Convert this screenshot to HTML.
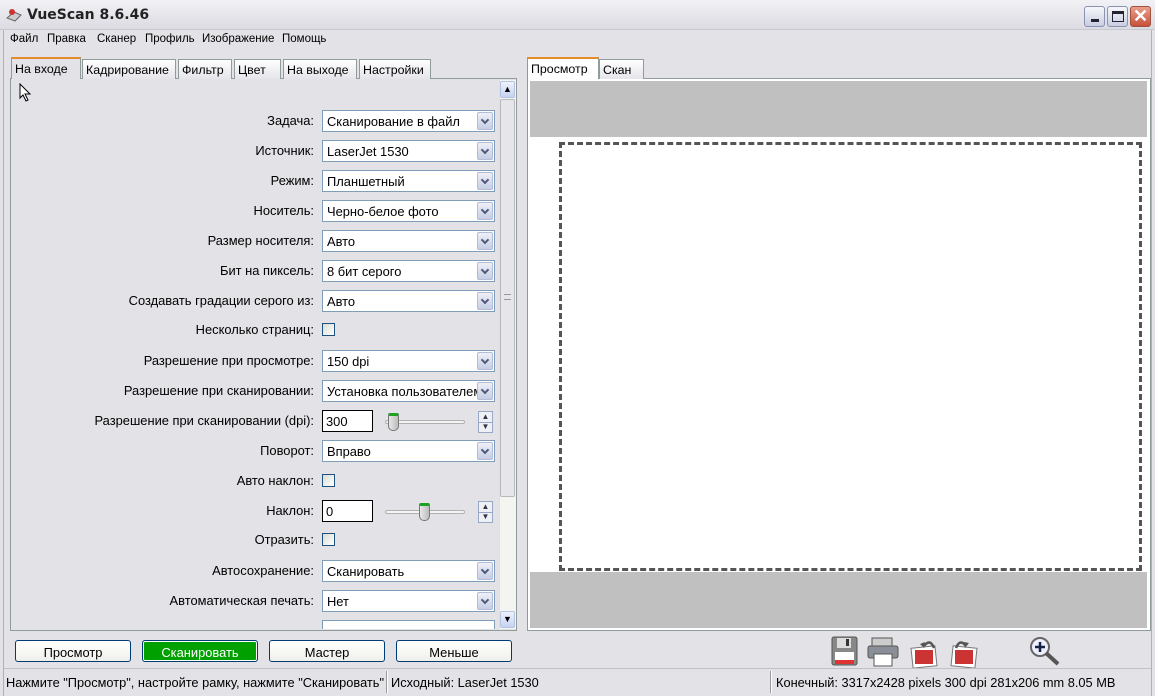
<!DOCTYPE html>
<html><head><meta charset="utf-8"><style>
*{box-sizing:border-box}
body{margin:0;width:1155px;height:696px;overflow:hidden;background:#e3e2e7;font-family:"Liberation Sans",sans-serif;font-size:12.9px;color:#000;position:relative}
.a{position:absolute}
.lbl{position:absolute;right:841px;white-space:nowrap;line-height:14px}
.cb{position:absolute;left:322px;width:173px;height:22px;background:#fff;border:1px solid #7f9db9;padding:3px 0 0 4px;white-space:nowrap;overflow:hidden}
.cb i{position:absolute;right:1px;top:1px;width:16px;height:18px;background:linear-gradient(#eef0f8,#c6cde4);border:1px solid #b0bcd8;border-radius:2px}
.cb i:after{content:"";position:absolute;left:4px;top:4px;width:4px;height:4px;border-right:2px solid #4d5a7a;border-bottom:2px solid #4d5a7a;transform:rotate(45deg)}
.ck{position:absolute;left:322px;width:13px;height:13px;border:1px solid #1c5180;background:linear-gradient(135deg,#dcdcd6,#fff)}
.tab{position:absolute;top:59px;height:20px;background:linear-gradient(#fff,#e4e4ea);border:1px solid #919b9c;border-bottom:none;padding:3px 3px 0;white-space:nowrap;font-size:12.4px;overflow:hidden}
.btn{position:absolute;top:640px;width:116px;height:22px;border:1px solid #003c74;border-radius:3px;background:linear-gradient(#fff,#f0f0ea);text-align:center;padding-top:4px}
.tb{position:absolute;width:51px;height:22px;border:1px solid #000;background:#fff;padding:3px 0 0 3px}
.sl{position:absolute;height:4px;width:80px;border:1px solid #b0b0b0;background:#f4f4f4;border-radius:2px}
.th{position:absolute;width:11px;height:18px;background:linear-gradient(90deg,#e8e8e8,#bcbcbc);border:1px solid #777;border-top:3px solid #21a121;border-radius:2px 2px 5px 5px}
.sp{position:absolute;left:478px;width:15px;height:22px;border:1px solid #9aa8c8;background:#eef0f6;font-size:8px;line-height:10px;text-align:center;color:#334}
.sp:before{content:"";position:absolute;left:0;right:0;top:10px;border-top:1px solid #9aa8c8}
.m{position:absolute;top:33px;font-size:11.5px}
.st{position:absolute;top:675px;white-space:nowrap;font-size:12.8px}
</style></head><body>
<div class="a" style="left:0;top:0;width:1155px;height:30px;background:linear-gradient(#f2f1f5,#dcdbe2);border-bottom:1px solid #c8c8d0"></div>
<div class="a" style="left:6px;top:8px;width:16px;height:14px"><svg width="16" height="14"><path d="M1 10 L8 4 L15 7 L9 13Z" fill="#ccc" stroke="#666"/><circle cx="6" cy="4" r="3" fill="#c33"/></svg></div>
<div class="a" style="left:27px;top:7px;font-weight:bold;font-size:14px;font-family:'DejaVu Sans',sans-serif;color:#222">VueScan 8.6.46</div>
<div class="a" style="left:1084px;top:6px;width:21px;height:21px;border:1px solid #8a92b4;border-radius:3px;background:linear-gradient(#f6f7fb,#c9cde0)"><div class="a" style="left:6px;top:12px;width:8px;height:3px;background:#223"></div></div>
<div class="a" style="left:1107px;top:6px;width:21px;height:21px;border:1px solid #8a92b4;border-radius:3px;background:linear-gradient(#f6f7fb,#c9cde0)"><div class="a" style="left:4px;top:4px;width:12px;height:11px;border:1px solid #223;border-top:3px solid #223"></div></div>
<div class="a" style="left:1130px;top:6px;width:21px;height:21px;border:1px solid #a05040;border-radius:3px;background:linear-gradient(#e9a08a,#c8503a);color:#fff;font-size:18px;line-height:19px;text-align:center;font-weight:bold">✕</div>
<div class="m" style="left:10px">Файл</div><div class="m" style="left:47px">Правка</div><div class="m" style="left:97px">Сканер</div><div class="m" style="left:145px">Профиль</div><div class="m" style="left:202px">Изображение</div><div class="m" style="left:282px">Помощь</div>
<div class="a" style="left:3px;top:30px;width:1px;height:666px;background:#b0b0b8"></div>
<div class="a" style="left:1151px;top:30px;width:1px;height:666px;background:#b0b0b8"></div>
<div class="a" style="left:10px;top:78px;width:507px;height:553px;border:1px solid #919b9c;background:#e3e2e7"></div>
<div class="tab" style="left:82px;width:94px">Кадрирование</div>
<div class="tab" style="left:178px;width:54px">Фильтр</div>
<div class="tab" style="left:234px;width:47px">Цвет</div>
<div class="tab" style="left:283px;width:74px">На выходе</div>
<div class="tab" style="left:359px;width:72px">Настройки</div>
<div class="tab" style="left:11px;top:57px;height:22px;width:70px;background:#e3e2e7;border-top:2px solid #e68b2c">На входе</div>
<svg class="a" style="left:19px;top:83px" width="14" height="20"><path d="M1 1 L1 15 L4 12 L7 18 L9 17 L6 11 L11 11Z" fill="#fff" stroke="#000"/></svg>
<div class="a" style="left:499px;top:80px;width:17px;height:549px;background:#f4f4f0;border-left:1px solid #e0e0e0"></div>
<div class="a" style="left:500px;top:81px;width:15px;height:17px;border:1px solid #b7c4e0;border-radius:2px;background:linear-gradient(#eef2fc,#c5d2f0);text-align:center;font-size:9px;line-height:15px">▲</div>
<div class="a" style="left:500px;top:99px;width:15px;height:398px;border:1px solid #b8b8c0;border-radius:2px;background:#e6e6ea"></div>
<div class="a" style="left:504px;top:294px;width:7px;height:6px;border-top:1px solid #999;border-bottom:1px solid #999"></div>
<div class="a" style="left:500px;top:611px;width:15px;height:17px;border:1px solid #b7c4e0;border-radius:2px;background:linear-gradient(#eef2fc,#c5d2f0);text-align:center;font-size:9px;line-height:15px">▼</div>
<div class="lbl" style="top:114px">Задача:</div><div class="cb" style="top:110px">Сканирование в файл<i></i></div>
<div class="lbl" style="top:144px">Источник:</div><div class="cb" style="top:140px">LaserJet 1530<i></i></div>
<div class="lbl" style="top:174px">Режим:</div><div class="cb" style="top:170px">Планшетный<i></i></div>
<div class="lbl" style="top:204px">Носитель:</div><div class="cb" style="top:200px">Черно-белое фото<i></i></div>
<div class="lbl" style="top:234px">Размер носителя:</div><div class="cb" style="top:230px">Авто<i></i></div>
<div class="lbl" style="top:264px">Бит на пиксель:</div><div class="cb" style="top:260px">8 бит серого<i></i></div>
<div class="lbl" style="top:294px">Создавать градации серого из:</div><div class="cb" style="top:290px">Авто<i></i></div>
<div class="lbl" style="top:323px">Несколько страниц:</div><div class="ck" style="top:323px"></div>
<div class="lbl" style="top:354px">Разрешение при просмотре:</div><div class="cb" style="top:350px">150 dpi<i></i></div>
<div class="lbl" style="top:384px">Разрешение при сканировании:</div><div class="cb" style="top:380px">Установка пользователем<i></i></div>
<div class="lbl" style="top:414px">Разрешение при сканировании (dpi):</div><div class="tb" style="left:322px;top:410px">300</div>
<div class="sl" style="left:385px;top:420px"></div><div class="th" style="left:388px;top:413px"></div><div class="sp" style="top:411px">▲<br>▼</div>
<div class="lbl" style="top:444px">Поворот:</div><div class="cb" style="top:440px">Вправо<i></i></div>
<div class="lbl" style="top:474px">Авто наклон:</div><div class="ck" style="top:474px"></div>
<div class="lbl" style="top:504px">Наклон:</div><div class="tb" style="left:322px;top:500px">0</div>
<div class="sl" style="left:385px;top:510px"></div><div class="th" style="left:419px;top:503px"></div><div class="sp" style="top:501px">▲<br>▼</div>
<div class="lbl" style="top:533px">Отразить:</div><div class="ck" style="top:533px"></div>
<div class="lbl" style="top:564px">Автосохранение:</div><div class="cb" style="top:560px">Сканировать<i></i></div>
<div class="lbl" style="top:594px">Автоматическая печать:</div><div class="cb" style="top:590px">Нет<i></i></div>
<div class="a" style="left:322px;top:620px;width:173px;height:9px;background:#fff;border:1px solid #7f9db9;border-bottom:none"></div>
<div class="btn" style="left:15px">Просмотр</div>
<div class="btn" style="left:142px;background:#00a000;color:#fff;border-color:#003c74;box-shadow:inset 0 0 0 1px #fff">Сканировать</div>
<div class="btn" style="left:269px">Мастер</div>
<div class="btn" style="left:396px">Меньше</div>
<div class="a" style="left:527px;top:78px;width:624px;height:553px;border:1px solid #919b9c;background:#fff"></div>
<div class="tab" style="left:599px;width:45px">Скан</div>
<div class="tab" style="left:527px;top:57px;height:22px;width:72px;background:#fff;border-top:2px solid #e68b2c">Просмотр</div>
<div class="a" style="left:530px;top:81px;width:617px;height:56px;background:#c0c0c0"></div>
<div class="a" style="left:530px;top:572px;width:617px;height:56px;background:#c0c0c0"></div>
<div class="a" style="left:559px;top:142px;width:583px;height:429px;border:3px dashed #555"></div>
<svg class="a" style="left:830px;top:634px" width="240" height="34">
<rect x="2" y="3" width="25" height="28" rx="2" fill="#888" stroke="#555"/><rect x="7" y="4" width="14" height="10" fill="#ddd"/><rect x="16" y="5" width="3" height="7" fill="#333"/><rect x="5" y="18" width="19" height="12" fill="#fff"/><rect x="5" y="26" width="19" height="4" fill="#d33"/>
<rect x="42" y="4" width="20" height="8" fill="#ccc" stroke="#555"/><rect x="38" y="12" width="30" height="12" rx="2" fill="#8a8e96" stroke="#555"/><rect x="44" y="20" width="18" height="12" fill="#fff" stroke="#555"/>
<g transform="translate(82,8)"><rect x="0" y="5" width="24" height="20" fill="#fff" stroke="#777" transform="rotate(-6 12 15)"/><rect x="3" y="8" width="18" height="14" fill="#c33"/><path d="M12 4 Q18 -4 22 6" fill="none" stroke="#555" stroke-width="2.5"/><path d="M8 2 L13 0 L12 6Z" fill="#555"/></g>
<g transform="translate(122,8)"><rect x="0" y="5" width="24" height="20" fill="#fff" stroke="#777" transform="rotate(6 12 15)"/><rect x="3" y="8" width="18" height="14" fill="#c33"/><path d="M4 6 Q8 -4 14 4" fill="none" stroke="#555" stroke-width="2.5"/><path d="M17 1 L12 0 L13 6Z" fill="#555"/></g>
<circle cx="210" cy="13" r="9" fill="#eef" stroke="#666" stroke-width="2"/><path d="M216 19 L228 30" stroke="#555" stroke-width="4"/><path d="M205 13 H215 M210 8 V18" stroke="#124" stroke-width="2.5"/>
</svg>
<div class="a" style="left:4px;top:668px;width:1147px;height:1px;background:#c0c0c8"></div>
<div class="st" style="left:6px">Нажмите "Просмотр", настройте рамку, нажмите "Сканировать"</div>
<div class="a" style="left:386px;top:671px;width:2px;height:22px;border-left:1px solid #999;border-right:1px solid #fff"></div>
<div class="st" style="left:391px">Исходный: LaserJet 1530</div>
<div class="a" style="left:770px;top:671px;width:2px;height:22px;border-left:1px solid #999;border-right:1px solid #fff"></div>
<div class="st" style="left:776px">Конечный: 3317x2428 pixels 300 dpi 281x206 mm 8.05 MB</div>
</body></html>
